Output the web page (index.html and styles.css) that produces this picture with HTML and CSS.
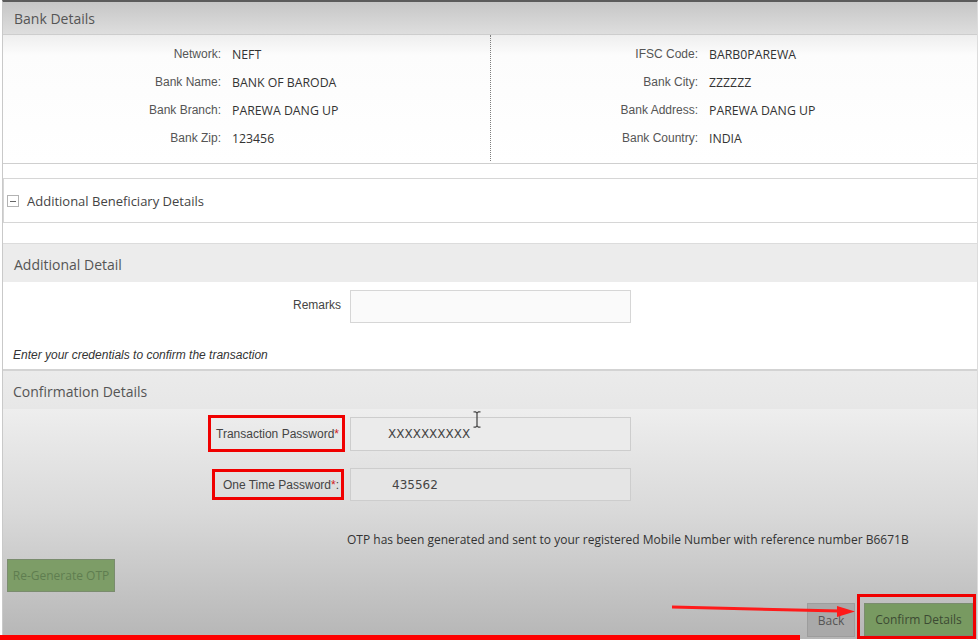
FILE: index.html
```html
<!DOCTYPE html>
<html lang="en">
<head>
<meta charset="utf-8">
<title>Confirm Transaction</title>
<link rel="stylesheet" href="styles.css">
</head>
<body>
<div class="screen">
  <div class="page">
    <section class="bank">
      <div class="bank-head">Bank Details</div>
      <div class="bank-body">
        <dl class="kv kv-left">
          <dt>Network:</dt><dd>NEFT</dd>
          <dt>Bank Name:</dt><dd>BANK OF BARODA</dd>
          <dt>Bank Branch:</dt><dd>PAREWA DANG UP</dd>
          <dt>Bank Zip:</dt><dd>123456</dd>
        </dl>
        <dl class="kv kv-right">
          <dt>IFSC Code:</dt><dd>BARB0PAREWA</dd>
          <dt>Bank City:</dt><dd>ZZZZZZ</dd>
          <dt>Bank Address:</dt><dd>PAREWA DANG UP</dd>
          <dt>Bank Country:</dt><dd>INDIA</dd>
        </dl>
      </div>
    </section>

    <div class="abd"><span class="toggle"></span>Additional Beneficiary Details</div>

    <section class="ad">
      <div class="sec-head">Additional Detail</div>
      <div class="ad-body">
        <div class="frow">
          <div class="lab-cell lab-remarks"><label class="flabel">Remarks</label></div>
          <input class="field field-remarks" type="text">
        </div>
        <p class="note">Enter your credentials to confirm the transaction</p>
      </div>
    </section>

    <section class="conf">
      <div class="sec-head conf-head">Confirmation Details</div>
      <div class="conf-body">
        <div class="frow">
          <div class="lab-cell"><label class="flabel hl-label hl-tp">Transaction Password<span class="req">*</span></label></div>
          <div class="field field-pw">XXXXXXXXXX</div>
        </div>
        <div class="frow frow-otp">
          <div class="lab-cell"><label class="flabel hl-label hl-otp">One Time Password<span class="req">*</span>:</label></div>
          <div class="field field-otp">435562</div>
        </div>
        <p class="otp-msg">OTP has been generated and sent to your registered Mobile Number with reference number B6671B</p>
        <button class="btn btn-green btn-regen" type="button">Re-Generate OTP</button>
        <div class="actions">
          <button class="btn btn-back" type="button">Back</button>
          <span class="hl-box"><button class="btn btn-green btn-confirm" type="button">Confirm Details</button></span>
        </div>
      </div>
    </section>
  </div>

  <svg class="ibeam" width="12" height="19" viewBox="0 0 12 19" aria-hidden="true">
    <path d="M6 2.5V16.5M2.5 1.8H5.2M6.8 1.8H9.5M2.5 17.2H5.2M6.8 17.2H9.5M5 2.2L6 3M7 2.2L6 3M5 16.8L6 16M7 16.8L6 16" stroke="#4a4a4a" stroke-width="1.3" fill="none"/>
  </svg>
  <svg class="arrow" width="192" height="20" viewBox="0 0 192 20" aria-hidden="true">
    <path d="M4 7 L172 11" stroke="#ff1a1a" stroke-width="3" fill="none"/>
    <polygon points="169,6 187,11.5 169,17" fill="#ff1a1a"/>
  </svg>
  <div class="redbar"></div>
</div>
</body>
</html>
```

FILE: styles.css
```css
* { box-sizing: border-box; }

body {
  margin: 0;
  background: #fff;
  font-family: "Open Sans", "DejaVu Sans", sans-serif;
  color: #444;
}

.screen {
  position: relative;
  width: 978px;
  height: 640px;
  overflow: hidden;
  background: #fff;
}

.page {
  margin-left: 2px;
  width: 976px;
  height: 640px;
  border-top: 2px solid #5b5b5b;
  border-left: 1px solid #c9c9c9;
  border-right: 1px solid #dcdcdc;
  display: flex;
  flex-direction: column;
}

/* Bank details */
.bank-head {
  height: 33px;
  padding: 1px 11px 0;
  line-height: 32px;
  font-size: 14px;
  color: #555;
  background: linear-gradient(#c6c6c6, #dedede);
  border-bottom: 1px solid #cdcdcd;
}

.bank-body {
  height: 129px;
  display: flex;
  border-bottom: 1px solid #cfcfcf;
  background: linear-gradient(#eeeeee, #fcfcfc 20px, #fff);
}

.kv {
  margin: 0;
  padding-top: 5px;
  display: grid;
  grid-auto-rows: 28px;
  column-gap: 11px;
  align-items: center;
  align-content: start;
}

.kv-left {
  width: 488px;
  grid-template-columns: 218px 1fr;
  border-right: 1px dotted #7d7d7d;
  margin-bottom: 2px;
}

.kv-right {
  flex: 1;
  grid-template-columns: 207px 1fr;
}

.kv dt {
  text-align: right;
  font-family: "Liberation Sans", Arial, sans-serif;
  font-size: 12px;
  color: #555;
}

.kv dd {
  margin: 0;
  font-size: 12.3px;
  color: #333;
}

/* Additional beneficiary */
.abd {
  margin-top: 14px;
  height: 45px;
  border: 1px solid #d6d6d6;
  border-right: none;
  display: flex;
  align-items: center;
  padding-left: 3px;
  font-size: 13px;
  color: #444;
}

.toggle {
  position: relative;
  width: 12px;
  height: 12px;
  border: 1px solid #b3b3b3;
  margin-right: 8px;
  flex: none;
}

.toggle::after {
  content: "";
  position: absolute;
  left: 2px;
  right: 2px;
  top: 5px;
  height: 1px;
  background: #666;
}

/* Section heads */
.ad { margin-top: 20px; }

.sec-head {
  height: 39px;
  border-top: 1px solid #dcdcdc;
  background: #ececec;
  padding-left: 11px;
  line-height: 41px;
  font-size: 14px;
  color: #555;
}

.ad-body {
  padding: 8px 0 6px;
  background: #fff;
}

.frow {
  display: flex;
  align-items: center;
}

.lab-cell {
  width: 342px;
  display: flex;
  justify-content: flex-end;
  flex: none;
}

.lab-remarks {
  width: 338px;
  margin-right: 9px;
  padding-bottom: 4px;
}

.flabel {
  font-family: "Liberation Sans", Arial, sans-serif;
  font-size: 12px;
  color: #444;
}

.field {
  height: 33px;
  width: 281px;
  border: 1px solid #d6d6d6;
  background: #fafafa;
  margin: 0;
  padding: 0;
  font: inherit;
}

.note {
  margin: 24px 0 0 10px;
  line-height: 16px;
  font-family: "Liberation Sans", Arial, sans-serif;
  font-style: italic;
  font-size: 12px;
  color: #333;
}

/* Confirmation */
.conf-head {
  height: 40px;
  border-top: 2px solid #d3d3d3;
  background: linear-gradient(#ebebeb, #e7e7e7);
  line-height: 41px;
  padding-left: 10px;
}

.conf-body {
  flex: 1;
  padding-top: 6px;
  background: linear-gradient(#eeeeee, #d9d9d9 45%, #b6b6b6);
}

.hl-label {
  display: flex;
  align-items: center;
  border: 3px solid #f00000;
  color: #444;
}

.hl-tp {
  height: 37px;
  padding: 0 3px 0 5px;
}

.hl-otp {
  height: 31px;
  padding: 0 2px 0 8px;
  margin-right: 1px;
}

.req { color: #d02020; }

.field-pw,
.field-otp {
  margin-left: 5px;
  display: flex;
  align-items: center;
  background: #ebebeb;
  border-color: #cdcdcd;
  font-family: "DejaVu Sans", sans-serif;
  font-size: 12px;
  color: #444;
}

.field-pw { padding-left: 37px; height: 34px; }
.field-otp { padding-left: 41px; background: #e5e5e5; }

.frow-otp { margin-top: 16px; }

.otp-msg {
  margin: 31px 0 0 344px;
  line-height: 16px;
  font-size: 12px;
  color: #333;
}

.btn {
  margin: 0;
  padding: 0;
  font-family: "Open Sans", sans-serif;
  font-size: 12px;
  cursor: pointer;
}

.btn-green {
  background: #7d9d67;
  border: 1px solid #7a8c6e;
}

.btn-regen {
  margin: 11px 0 0 4px;
  width: 108px;
  height: 33px;
  color: #5f7d50;
}

.actions {
  margin-top: 2px;
  display: flex;
  justify-content: flex-end;
  align-items: flex-start;
  padding-right: 1px;
}

.btn-back {
  margin-top: 9px;
  width: 48px;
  height: 34px;
  background: #a9a9a9;
  border: 1px solid #9d9d9d;
  color: #555;
  margin-right: 2px;
}

.hl-box {
  display: block;
  border: 3px solid #f00000;
  padding: 6px 0 0 4px;
  height: 45px;
}

.btn-confirm {
  width: 109px;
  height: 33px;
  background: #789a61;
  color: #3c4a33;
}

/* Overlays */
.ibeam {
  position: absolute;
  left: 471px;
  top: 410px;
}

.arrow {
  position: absolute;
  left: 668px;
  top: 600px;
}

.redbar {
  position: absolute;
  left: 0;
  top: 635px;
  width: 800px;
  height: 5px;
  background: #ff0000;
}
```
